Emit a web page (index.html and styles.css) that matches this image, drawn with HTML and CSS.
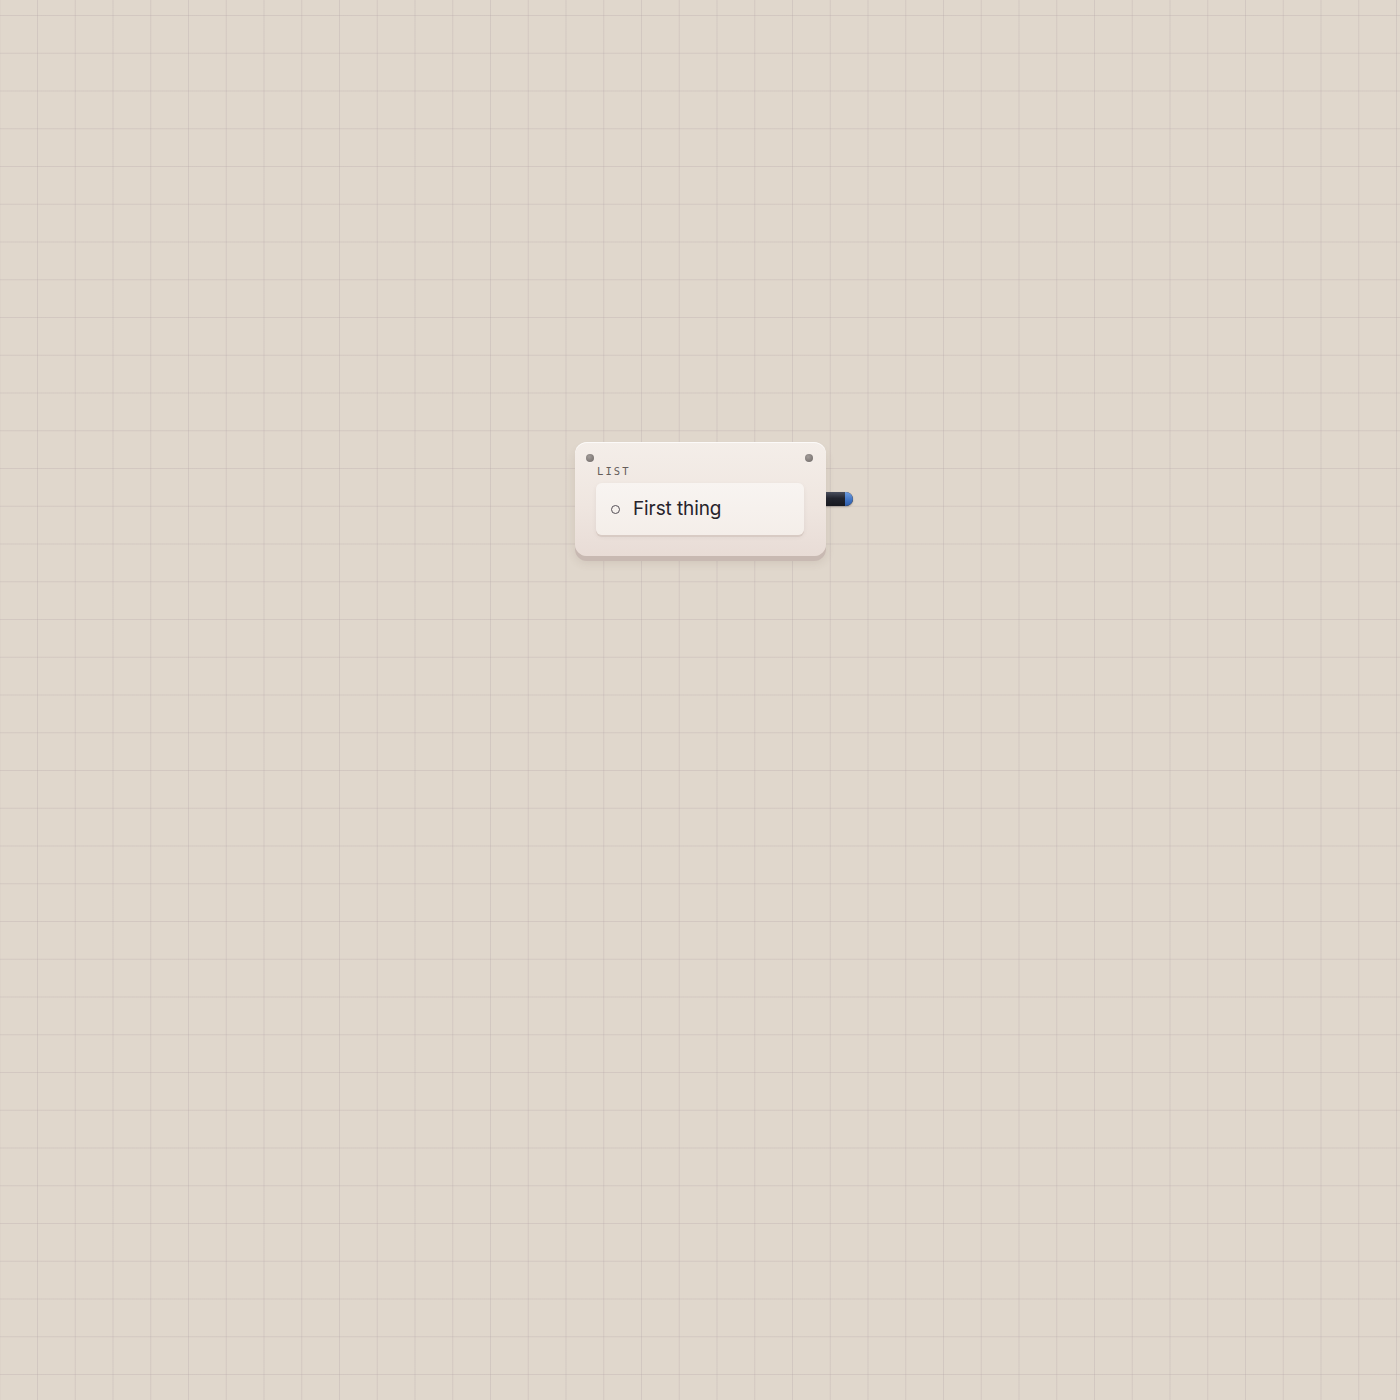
FILE: index.html
```html
<!DOCTYPE html>
<html lang="en">
<head>
<meta charset="utf-8">
<title>List node</title>
<link rel="stylesheet" href="styles.css">
</head>
<body>
<div class="canvas">
  <div class="node">
    <div class="port"><span class="port-cap"></span></div>
    <div class="node-body">
      <span class="screw screw-left"></span>
      <span class="screw screw-right"></span>
      <div class="node-label">LIST</div>
      <div class="list-item">
        <span class="bullet"></span>
        <span class="item-text">First thing</span>
      </div>
    </div>
  </div>
</div>
</body>
</html>
```
FILE: styles.css
```css
html, body {
  margin: 0;
  padding: 0;
}

body {
  width: 1400px;
  height: 1400px;
  overflow: hidden;
  font-family: "Inter", "Noto Sans", sans-serif;
}

.canvas {
  position: relative;
  width: 1400px;
  height: 1400px;
  background-color: #e0d7cc;
  background-image:
    linear-gradient(to right, rgba(180, 165, 168, 0.3) 1px, transparent 1px),
    linear-gradient(to bottom, rgba(180, 165, 168, 0.3) 1px, transparent 1px);
  background-size: 37.75px 37.75px;
  background-position: -0.75px 15px;
}

.node {
  position: absolute;
  left: 575px;
  top: 442px;
  width: 251px;
}

.port {
  position: absolute;
  left: 240px;
  top: 50px;
  width: 38px;
  height: 14px;
  border-radius: 3px 7px 7px 3px;
  background: linear-gradient(to bottom, #4a4f5e 0%, #22252f 45%, #171920 100%);
  box-shadow: 0 1px 2px rgba(0, 0, 0, 0.25);
  z-index: 0;
  overflow: hidden;
}

.port-cap {
  position: absolute;
  right: 0;
  top: 0;
  width: 8px;
  height: 14px;
  border-radius: 0 7px 7px 0;
  background: linear-gradient(to bottom, #6f9ee0 0%, #3f72c2 60%, #2e5aa3 100%);
}

.node-body {
  position: relative;
  z-index: 1;
  box-sizing: border-box;
  height: 114px;
  padding: 23px 22px 0 21px;
  border-radius: 12px;
  background: linear-gradient(to bottom, #f4eee9 0%, #efe6e0 55%, #e8dcd6 100%);
  box-shadow:
    inset 0 1px 0 rgba(255, 255, 255, 0.7),
    0 5px 0 #c8b9b2,
    0 7px 10px rgba(90, 70, 60, 0.12);
}

.screw {
  position: absolute;
  top: 12px;
  width: 8px;
  height: 8px;
  border-radius: 50%;
  background: radial-gradient(circle at 40% 35%, #a29c99 0%, #7b7572 75%);
  box-shadow: 0 0.5px 0 rgba(255, 255, 255, 0.6);
}

.screw-left {
  left: 11px;
}

.screw-right {
  right: 13px;
}

.node-label {
  font-family: "DejaVu Sans Mono", "Liberation Mono", monospace;
  font-size: 10.5px;
  line-height: 12px;
  letter-spacing: 2.1px;
  color: #655d5a;
  height: 12px;
  margin-left: 1px;
}

.list-item {
  display: flex;
  align-items: center;
  gap: 13px;
  box-sizing: border-box;
  height: 52px;
  margin-top: 6px;
  padding-left: 15px;
  border-radius: 6px;
  background: linear-gradient(to bottom, #f8f4f1 0%, #f4eee9 100%);
  box-shadow:
    0 2px 0 #d8cbc4,
    0 2px 4px rgba(90, 70, 60, 0.08);
}

.bullet {
  box-sizing: border-box;
  width: 9px;
  height: 9px;
  border-radius: 50%;
  border: 1.2px solid #555057;
  flex: none;
}

.item-text {
  font-size: 19px;
  line-height: 24px;
  color: #26232b;
  letter-spacing: -0.1px;
}
```
